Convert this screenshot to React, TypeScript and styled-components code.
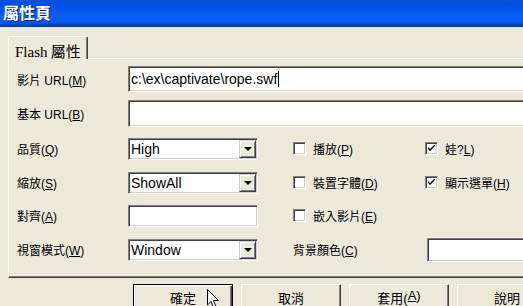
import React from "react";
import styled, { createGlobalStyle } from "styled-components";

const GlobalStyle = createGlobalStyle`
  html, body {
    margin: 0;
    padding: 0;
    background: #ece9d8;
    overflow: hidden;
  }
  body {
    font-family: "Liberation Sans", "Noto Sans CJK TC", sans-serif;
    font-size: 12px;
    color: #000;
  }
`;

const Window = styled.div`
  position: relative;
  width: 523px;
  height: 306px;
  overflow: hidden;
  background: #ece9d8;
`;

const TitleBar = styled.div`
  height: 27px;
  box-sizing: border-box;
  padding: 2px 0 0 3px;
  background: linear-gradient(
    to bottom,
    #0a4fdc 0%,
    #0050e6 20%,
    #0a60f6 60%,
    #0459ec 85%,
    #003fc8 93%,
    #0036b0 100%
  );
  color: #fff;
  font: bold 16px "Noto Sans CJK TC", sans-serif;
  line-height: 20px;
  text-shadow: 1px 1px 0 #0a2470;
`;

const Content = styled.div`
  padding: 9px 0 0 8px;
`;

const TabStrip = styled.div`
  display: flex;
  height: 22px;
`;

const Tab = styled.div`
  position: relative;
  z-index: 1;
  width: 80px;
  height: 23px;
  box-sizing: border-box;
  padding: 3px 0 0 6px;
  background: #ece9d8;
  border-top: 1px solid #fff;
  border-left: 1px solid #fff;
  border-right: 1px solid #404040;
  border-radius: 2px 2px 0 0;
  box-shadow: inset -1px 0 #808080;
  white-space: nowrap;
`;

const TabLatin = styled.span`
  font-family: "Liberation Serif", serif;
  font-size: 15px;
`;

const TabCjk = styled.span`
  font-family: "Noto Sans CJK TC", sans-serif;
  font-size: 15px;
`;

const Panel = styled.div`
  width: 560px;
  height: 220px;
  box-sizing: border-box;
  padding: 3px 0 0 8px;
  border: 1px solid;
  border-color: #fff #404040 #404040 #fff;
  box-shadow: inset -1px -1px #808080;
`;

const FormGrid = styled.div`
  display: grid;
  grid-template-columns: 111px 165px 132px 200px;
  grid-template-rows: 34px 35px 35px 33px 33px 35px;
  align-items: center;
`;

const FieldLabel = styled.div`
  grid-column: 1;
  white-space: nowrap;
`;

const SideLabel = styled.div`
  white-space: nowrap;
`;

const Mn = styled.u`
  text-decoration: underline;
  text-underline-offset: 1px;
`;

const Field = styled.div<{ $h: number; $wide?: boolean; $w?: number; $shift?: number }>`
  position: relative;
  grid-column: ${(p) => (p.$wide ? "2 / -1" : "auto")};
  width: ${(p) => (p.$w ? `${p.$w}px` : "auto")};
  height: ${(p) => p.$h}px;
  margin-left: ${(p) => p.$shift ?? 0}px;
  box-sizing: border-box;
  display: flex;
  align-items: center;
  padding-left: 1px;
  background: #fff;
  border: 1px solid;
  border-color: #808080 #fff #fff #808080;
  box-shadow: inset 1px 1px #404040, inset -1px -1px #d4d0c8;
  font-size: 14px;
  white-space: nowrap;
`;

const FieldText = styled.span`
  padding-left: 1px;
  line-height: 16px;
`;

const Caret = styled.span`
  display: inline-block;
  width: 1px;
  height: 16px;
  margin-left: 1px;
  background: #000;
  vertical-align: -3px;
`;

const DropButton = styled.div`
  position: absolute;
  top: 1px;
  right: 1px;
  width: 17px;
  bottom: 1px;
  box-sizing: border-box;
  display: flex;
  align-items: center;
  justify-content: center;
  background: #ece9d8;
  border: 1px solid;
  border-color: #d4d0c8 #404040 #404040 #d4d0c8;
  box-shadow: inset 1px 1px #fff, inset -1px -1px #808080;
`;

const Arrow = styled.div`
  width: 0;
  height: 0;
  border-left: 4px solid transparent;
  border-right: 4px solid transparent;
  border-top: 4px solid #000;
  margin-top: 1px;
`;

const Check = styled.label`
  display: flex;
  align-items: center;
  gap: 7px;
  white-space: nowrap;
`;

const Box = styled.span`
  width: 13px;
  height: 13px;
  box-sizing: border-box;
  display: flex;
  align-items: center;
  justify-content: center;
  background: #fff;
  border: 1px solid;
  border-color: #808080 #fff #fff #808080;
  box-shadow: inset 1px 1px #404040, inset -1px -1px #d4d0c8;
`;

const ButtonRow = styled.div`
  display: flex;
  gap: 8px;
  margin: 6px 0 0 125px;
`;

const Button = styled.div<{ $default?: boolean }>`
  flex: none;
  width: 100px;
  height: 28px;
  box-sizing: border-box;
  display: flex;
  justify-content: center;
  padding-top: 3px;
  background: #ece9d8;
  font-size: 13px;
  border: 1px solid;
  border-color: ${(p) => (p.$default ? "#000" : "#fff #404040 #404040 #fff")};
  box-shadow: ${(p) =>
    p.$default
      ? "inset 1px 1px #fff, inset -1px -1px #404040, inset -2px -2px #808080"
      : "inset -1px -1px #808080"};
`;

const Pointer = styled.svg`
  position: absolute;
  left: 207px;
  top: 289px;
`;

const Combo = ({ value }: { value: string }) => (
  <Field $h={22} $w={130}>
    <FieldText>{value}</FieldText>
    <DropButton>
      <Arrow />
    </DropButton>
  </Field>
);

const CheckItem = ({
  checked,
  children,
}: {
  checked?: boolean;
  children: React.ReactNode;
}) => (
  <Check>
    <Box>
      {checked && (
        <svg width="7" height="7" viewBox="0 0 7 7">
          <path d="M0 2 L2 4 L7 -1 L7 1 L2 6 L0 4 Z" fill="#000" />
        </svg>
      )}
    </Box>
    <span>{children}</span>
  </Check>
);

export default function App() {
  return (
    <Window>
      <GlobalStyle />
      <TitleBar>屬性頁</TitleBar>
      <Content>
        <TabStrip>
          <Tab>
            <TabLatin>Flash</TabLatin> <TabCjk>屬性</TabCjk>
          </Tab>
        </TabStrip>
        <Panel>
          <FormGrid>
            <FieldLabel>
              影片 URL(<Mn>M</Mn>)
            </FieldLabel>
            <Field $h={26} $wide>
              <FieldText>
                c:\ex\captivate\rope.swf
                <Caret />
              </FieldText>
            </Field>

            <FieldLabel>
              基本 URL(<Mn>B</Mn>)
            </FieldLabel>
            <Field $h={27} $wide />

            <FieldLabel>
              品質(<Mn>Q</Mn>)
            </FieldLabel>
            <Combo value="High" />
            <CheckItem>
              播放(<Mn>P</Mn>)
            </CheckItem>
            <CheckItem checked>
              娃?<Mn>L</Mn>)
            </CheckItem>

            <FieldLabel>
              縮放(<Mn>S</Mn>)
            </FieldLabel>
            <Combo value="ShowAll" />
            <CheckItem>
              裝置字體(<Mn>D</Mn>)
            </CheckItem>
            <CheckItem checked>
              顯示選單(<Mn>H</Mn>)
            </CheckItem>

            <FieldLabel>
              對齊(<Mn>A</Mn>)
            </FieldLabel>
            <Field $h={22} $w={130} />
            <CheckItem>
              嵌入影片(<Mn>E</Mn>)
            </CheckItem>

            <FieldLabel>
              視窗模式(<Mn>W</Mn>)
            </FieldLabel>
            <Combo value="Window" />
            <SideLabel>
              背景顏色(<Mn>C</Mn>)
            </SideLabel>
            <Field $h={24} $shift={2} />
          </FormGrid>
        </Panel>
        <ButtonRow>
          <Button $default>確定</Button>
          <Button>取消</Button>
          <Button>
            套用(<Mn>A</Mn>)
          </Button>
          <Button>說明</Button>
        </ButtonRow>
      </Content>
      <Pointer width="13" height="20" viewBox="0 0 13 20">
        <path
          d="M0.5 0.5 L0.5 16 L4 12.5 L6.5 18.5 L9 17.5 L6.5 11.5 L11.5 11.5 Z"
          fill="#fff"
          stroke="#000"
          strokeWidth="1"
        />
      </Pointer>
    </Window>
  );
}
